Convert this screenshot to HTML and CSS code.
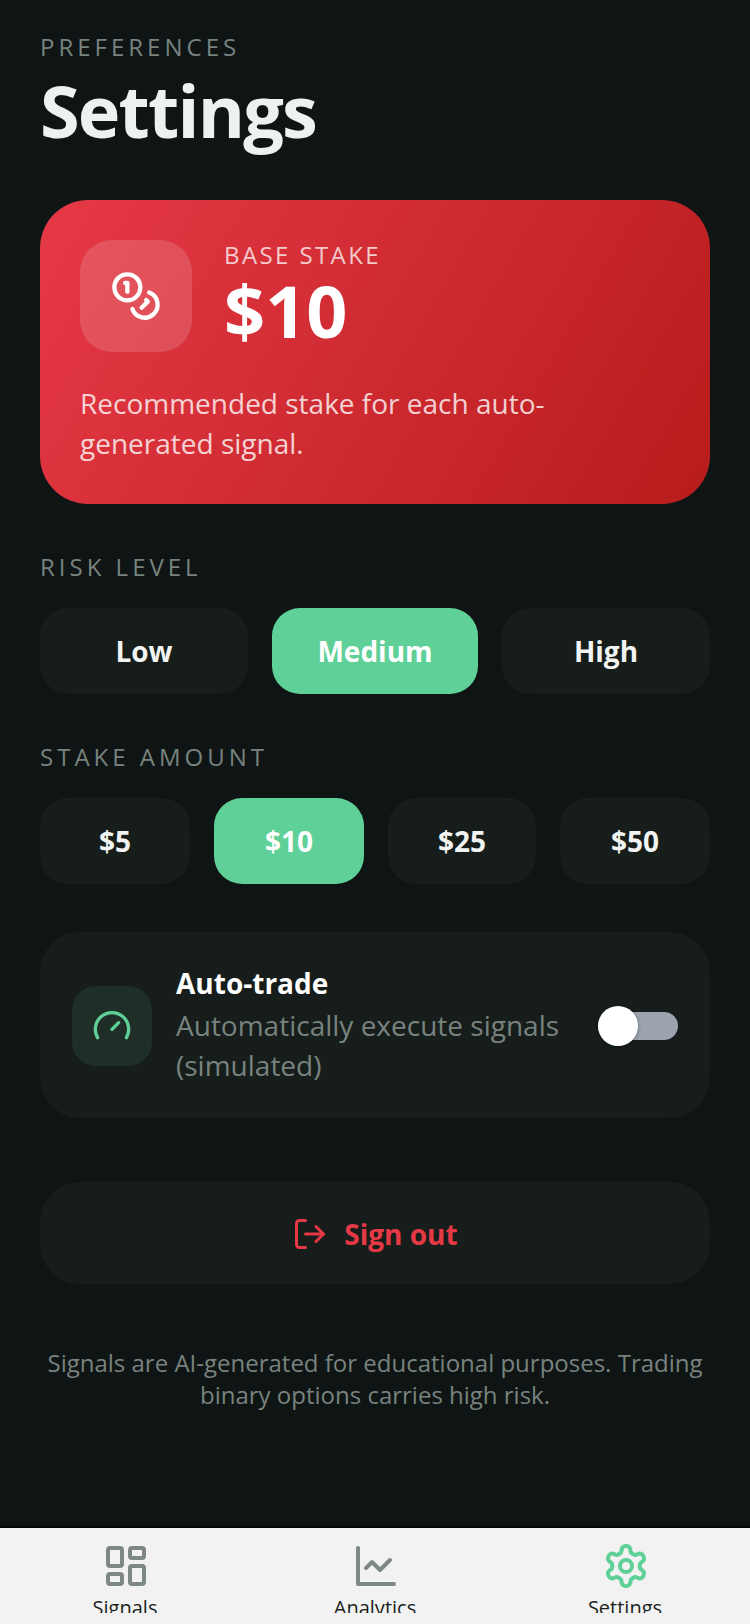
FILE: index.html
```html
<!DOCTYPE html>
<html lang="en">
<head>
    <meta charset="UTF-8">
    <meta name="viewport" content="width=device-width, initial-scale=1.0">
    <title>Settings</title>
    <link rel="stylesheet" href="styles.css">
</head>
<body>
    <main class="content">
        <header class="page-header">
            <div class="eyebrow">PREFERENCES</div>
            <h1>Settings</h1>
        </header>

        <section class="stake-card">
            <div class="stake-top">
                <div class="stake-icon">
                    <svg width="52" height="52" viewBox="0 0 24 24" class="icon">
                        <circle cx="8" cy="8" r="6"/>
                        <path d="M18.09 10.37A6 6 0 1 1 10.34 18"/>
                        <path d="M7 6h1v4"/>
                        <path d="m16.71 13.88.7.71-2.82 2.82"/>
                    </svg>
                </div>
                <div>
                    <div class="stake-label">BASE STAKE</div>
                    <div class="stake-value">$10</div>
                </div>
            </div>
            <p class="stake-note">Recommended stake for each auto-generated signal.</p>
        </section>

        <div class="section-label">RISK LEVEL</div>
        <div class="options options-3">
            <button class="option">Low</button>
            <button class="option active">Medium</button>
            <button class="option">High</button>
        </div>

        <div class="section-label">STAKE AMOUNT</div>
        <div class="options options-4">
            <button class="option">$5</button>
            <button class="option active">$10</button>
            <button class="option">$25</button>
            <button class="option">$50</button>
        </div>

        <section class="auto-card">
            <div class="auto-icon">
                <svg width="40" height="40" viewBox="0 0 24 24" class="icon">
                    <path d="m12 14 4-4"/>
                    <path d="M3.34 19a10 10 0 1 1 17.32 0"/>
                </svg>
            </div>
            <div class="auto-text">
                <div class="auto-title">Auto-trade</div>
                <div class="auto-sub">Automatically execute signals (simulated)</div>
            </div>
            <div class="toggle">
                <div class="toggle-knob"></div>
            </div>
        </section>

        <button class="sign-out">
            <svg width="36" height="36" viewBox="0 0 24 24" class="icon">
                <path d="M9 21H5a2 2 0 0 1-2-2V5a2 2 0 0 1 2-2h4"/>
                <polyline points="16 17 21 12 16 7"/>
                <line x1="21" y1="12" x2="9" y2="12"/>
            </svg>
            <span>Sign out</span>
        </button>

        <p class="disclaimer">Signals are AI-generated for educational purposes. Trading binary options carries high risk.</p>
    </main>

    <nav class="tab-bar">
        <a class="tab">
            <svg width="48" height="48" viewBox="0 0 24 24" class="icon">
                <rect x="3" y="3" width="7" height="9" rx="1"/>
                <rect x="14" y="3" width="7" height="5" rx="1"/>
                <rect x="14" y="12" width="7" height="9" rx="1"/>
                <rect x="3" y="16" width="7" height="5" rx="1"/>
            </svg>
            <span>Signals</span>
        </a>
        <a class="tab">
            <svg width="48" height="48" viewBox="0 0 24 24" class="icon">
                <path d="M3 3v18h18"/>
                <path d="m19 9-5 5-4-4-3 3"/>
            </svg>
            <span>Analytics</span>
        </a>
        <a class="tab tab-active">
            <svg width="48" height="48" viewBox="0 0 24 24" class="icon">
                <path d="M12.22 2h-.44a2 2 0 0 0-2 2v.18a2 2 0 0 1-1 1.73l-.43.25a2 2 0 0 1-2 0l-.15-.08a2 2 0 0 0-2.73.73l-.22.38a2 2 0 0 0 .73 2.73l.15.1a2 2 0 0 1 1 1.72v.51a2 2 0 0 1-1 1.74l-.15.09a2 2 0 0 0-.73 2.73l.22.38a2 2 0 0 0 2.73.73l.15-.08a2 2 0 0 1 2 0l.43.25a2 2 0 0 1 1 1.73V20a2 2 0 0 0 2 2h.44a2 2 0 0 0 2-2v-.18a2 2 0 0 1 1-1.73l.43-.25a2 2 0 0 1 2 0l.15.08a2 2 0 0 0 2.73-.73l.22-.39a2 2 0 0 0-.73-2.73l-.15-.08a2 2 0 0 1-1-1.74v-.5a2 2 0 0 1 1-1.74l.15-.09a2 2 0 0 0 .73-2.73l-.22-.38a2 2 0 0 0-2.73-.73l-.15.08a2 2 0 0 1-2 0l-.43-.25a2 2 0 0 1-1-1.73V4a2 2 0 0 0-2-2z"/>
                <circle cx="12" cy="12" r="3"/>
            </svg>
            <span>Settings</span>
        </a>
    </nav>
</body>
</html>
```

FILE: styles.css
```css
* {
    box-sizing: border-box;
}

body {
    margin: 0;
    height: 1624px;
    display: flex;
    flex-direction: column;
    overflow: hidden;
    background-color: #0f1514;
    color: #f1f4f2;
    font-family: "Open Sans", sans-serif;
}

.icon {
    fill: none;
    stroke: currentColor;
    stroke-width: 2;
    stroke-linecap: round;
    stroke-linejoin: round;
    flex-shrink: 0;
}

.content {
    flex: 1;
    padding: 31px 40px 0;
}

.eyebrow {
    font-size: 24px;
    line-height: 32px;
    letter-spacing: 4px;
    color: #78837f;
}

h1 {
    margin: 7px 0 0;
    font-size: 72px;
    line-height: 80px;
    font-weight: 700;
    letter-spacing: -1.8px;
    color: #eef2ef;
}

/* base stake card */
.stake-card {
    margin-top: 50px;
    padding: 40px 40px 41px;
    border-radius: 48px;
    background: linear-gradient(120deg, #e63946, #b71c1c);
    color: #fff;
}

.stake-top {
    display: flex;
    gap: 32px;
}

.stake-icon {
    width: 112px;
    height: 112px;
    border-radius: 32px;
    background-color: rgba(255, 255, 255, 0.15);
    display: flex;
    align-items: center;
    justify-content: center;
}

.stake-label {
    font-size: 24px;
    line-height: 30px;
    letter-spacing: 2.4px;
    color: rgba(255, 255, 255, 0.75);
}

.stake-value {
    font-size: 72px;
    line-height: 80px;
    font-weight: 700;
}

.stake-note {
    margin: 31px 0 0;
    font-size: 28px;
    line-height: 40px;
    color: rgba(255, 255, 255, 0.8);
}

/* option rows */
.section-label {
    margin-top: 47px;
    font-size: 24px;
    line-height: 32px;
    letter-spacing: 4px;
    color: #78837f;
}

.options {
    margin-top: 25px;
    display: grid;
    gap: 24px;
}

.options-3 {
    grid-template-columns: 1fr 206px 1fr;
}

.options-4 {
    grid-template-columns: 1fr 1fr 148px 1fr;
}

.option {
    height: 86px;
    border: none;
    border-radius: 28px;
    background-color: #161d1a;
    color: #f1f4f2;
    font-family: inherit;
    font-size: 28px;
    font-weight: 700;
}

.option.active {
    background-color: #5fd097;
    color: #fff;
}

/* auto-trade */
.auto-card {
    margin-top: 48px;
    height: 186px;
    padding: 0 32px;
    border-radius: 40px;
    background-color: #161d1a;
    display: flex;
    align-items: center;
    gap: 24px;
}

.auto-icon {
    width: 80px;
    height: 80px;
    margin-top: 2px;
    border-radius: 24px;
    background-color: #1f2f28;
    color: #5fd097;
    display: flex;
    align-items: center;
    justify-content: center;
    flex-shrink: 0;
}

.auto-text {
    flex: 1;
}

.auto-title {
    margin-bottom: 4px;
    font-size: 28px;
    line-height: 36px;
    font-weight: 700;
    color: #fff;
}

.auto-sub {
    font-size: 28px;
    line-height: 40px;
    color: #78837f;
}

.toggle {
    width: 80px;
    height: 28px;
    margin-top: 2px;
    border-radius: 14px;
    background-color: #9ca3af;
    display: flex;
    align-items: center;
    flex-shrink: 0;
}

.toggle-knob {
    width: 40px;
    height: 40px;
    border-radius: 50%;
    background-color: #fff;
    box-shadow: 0 1px 4px rgba(0, 0, 0, 0.3);
}

/* sign out */
.sign-out {
    margin-top: 64px;
    width: 100%;
    height: 102px;
    padding: 2px 0 0;
    border: none;
    border-radius: 40px;
    background-color: #161d1a;
    color: #e63946;
    font-family: inherit;
    font-size: 28px;
    font-weight: 700;
    display: flex;
    align-items: center;
    justify-content: center;
    gap: 16px;
}

.disclaimer {
    margin: 63px 0 0;
    font-size: 24px;
    line-height: 32px;
    text-align: center;
    color: #78837f;
}

/* bottom tabs */
.tab-bar {
    height: 98px;
    padding-bottom: 11px;
    border-top: 2px solid #050807;
    background-color: #f2f2f2;
    display: grid;
    grid-template-columns: repeat(3, 1fr);
}

.tab {
    padding-top: 14px;
    overflow: hidden;
    display: flex;
    flex-direction: column;
    align-items: center;
    color: #7d8783;
}

.tab .icon {
    margin-left: 2px;
}

.tab span {
    margin-top: 4px;
    font-size: 20px;
    line-height: 28px;
    color: #1a1f1d;
}

.tab-active {
    color: #5fd097;
}
```
